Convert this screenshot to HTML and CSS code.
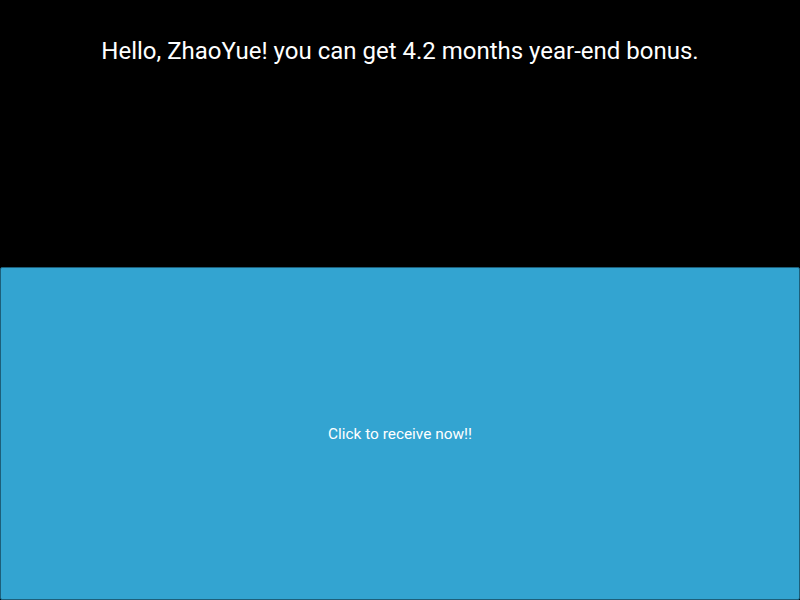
FILE: index.html
```html
<!DOCTYPE html>
<html>
<head>
<meta charset="utf-8">
<link rel="stylesheet" href="styles.css">
</head>
<body>
<div class="page">
  <div class="greeting">Hello, ZhaoYue! you can get 4.2 months year-end bonus.</div>
  <button class="receive">Click to receive now!!</button>
</div>
</body>
</html>
```
FILE: styles.css
```css
html, body {
  margin: 0;
  padding: 0;
  background: #000;
  height: 100%;
}
.page {
  display: flex;
  flex-direction: column;
  height: 600px;
  width: 800px;
  font-family: Roboto, "Liberation Sans", sans-serif;
}
.greeting {
  color: #fff;
  font-size: 24px;
  text-align: center;
  padding-top: 37px;
  height: 267px;
  flex-shrink: 0;
  box-sizing: border-box;
  line-height: 28px;
}
.receive {
  flex: 1;
  margin: 0;
  width: 800px;
  background: #33a4d1;
  color: #fff;
  border: 1px solid #1d5f7a;
  border-radius: 2px;
  font-family: Roboto, "Liberation Sans", sans-serif;
  font-size: 15.4px;
  padding: 0;
}
```
